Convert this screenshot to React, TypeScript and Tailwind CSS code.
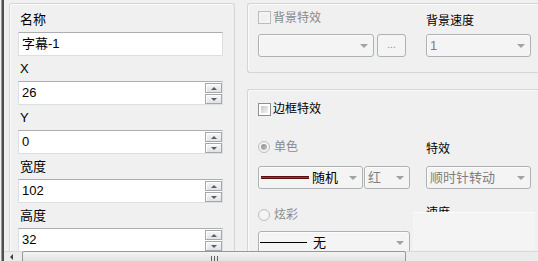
import React from 'react';

type Row = { label: string; value: string; spin: boolean };

const ROWS: Row[] = [
  { label: '名称', value: '字幕-1', spin: false },
  { label: 'X', value: '26', spin: true },
  { label: 'Y', value: '0', spin: true },
  { label: '宽度', value: '102', spin: true },
  { label: '高度', value: '32', spin: true },
];

function SpinButton({ up }: { up?: boolean }) {
  return (
    <div className="flex h-[10px] w-[17px] items-center justify-center border border-[#a7a7a7] bg-gradient-to-b from-[#f7f7f7] to-[#e3e3e3] shadow-[inset_1px_1px_0_#ffffff]">
      {up ? (
        <div className="h-0 w-0 border-x-[3px] border-b-[3px] border-x-transparent border-b-[#4d5f7c]" />
      ) : (
        <div className="h-0 w-0 border-x-[3px] border-t-[3px] border-x-transparent border-t-[#4d5f7c]" />
      )}
    </div>
  );
}

function Field({ row }: { row: Row }) {
  return (
    <div className="relative flex h-[24px] w-[205px] items-center border border-[#dbdfe6] border-t-[#abadb3] bg-white pl-[3px] text-[13px] text-black">
      <span>{row.value}</span>
      {row.spin && (
        <div className="absolute right-0 top-[1px] flex flex-col gap-[1px]">
          <SpinButton up />
          <SpinButton />
        </div>
      )}
    </div>
  );
}

function Arrow() {
  return <div className="h-0 w-0 border-x-[4px] border-t-[4px] border-x-transparent border-t-[#a2a2a2]" />;
}

function Combo({ className, children }: { className: string; children?: React.ReactNode }) {
  return (
    <div
      className={`flex h-[23px] shrink-0 items-center justify-between rounded-[3px] border border-[#adb2b5] bg-[#f4f4f4] pl-[3px] pr-[5px] shadow-[inset_1px_1px_0_#fbfbfb] ${className}`}
    >
      <div className="flex items-center">{children}</div>
      <Arrow />
    </div>
  );
}

function CheckBox({ disabled }: { disabled?: boolean }) {
  return disabled ? (
    <div className="h-[13px] w-[13px] shrink-0 border border-[#bcbcbc] bg-[#f4f4f4] p-[2px]">
      <div className="h-full w-full bg-[#f0f0f0]" />
    </div>
  ) : (
    <div className="h-[13px] w-[13px] shrink-0 border border-[#8e8f8f] bg-white p-[2px]">
      <div className="h-full w-full bg-gradient-to-br from-[#c8c8c8] to-[#f4f4f4]" />
    </div>
  );
}

function Radio({ checked }: { checked?: boolean }) {
  return (
    <div className="flex h-[12px] w-[12px] shrink-0 items-center justify-center rounded-full border border-[#bdbdbd] bg-[#f4f4f4]">
      {checked && <div className="h-[6px] w-[6px] rounded-full bg-gradient-to-br from-[#8e8e8e] to-[#c4c4c4]" />}
    </div>
  );
}

export default function App() {
  return (
    <div className="flex h-[261px] w-[538px] overflow-hidden bg-[#f0f0f0] font-['Liberation_Sans','Noto_Sans_CJK_SC',sans-serif] text-black">
      {/* 左侧分隔线 */}
      <div className="flex w-[4px] shrink-0">
        <div className="ml-[1px] w-[1px] bg-[#9a9a9a]" />
        <div className="w-[2px] bg-[#4f4f4f]" />
      </div>

      <div className="flex min-w-0 flex-1 flex-col">
        <div className="flex h-[251px] shrink-0 overflow-hidden pl-[5px] pt-[3px]">
          {/* 属性 */}
          <div className="w-[226px] shrink-0 rounded-t-[3px] border border-b-0 border-[#d5d5d5] pl-[8px] pt-[3px] shadow-[inset_1px_1px_0_#fafafa]">
            {ROWS.map(row => (
              <div key={row.label}>
                <div className="flex h-[25px] items-center pl-[2px] text-[13px]">{row.label}</div>
                <Field row={row} />
              </div>
            ))}
          </div>

          <div className="ml-[12px] flex min-w-0 flex-1 flex-col">
            {/* 背景 */}
            <div className="flex h-[70px] w-[300px] shrink-0 rounded-l-[3px] border border-r-0 border-[#d5d5d5] pl-[10px] text-[12px] shadow-[inset_1px_1px_0_#fafafa]">
              <div className="w-[148px] shrink-0 pt-[7px]">
                <div className="flex h-[13px] items-center gap-[2px]">
                  <CheckBox disabled />
                  <span className="text-[#8a8a8a]">背景特效</span>
                </div>
                <div className="mt-[10px] flex gap-[3px]">
                  <Combo className="w-[116px]" />
                  <div className="flex h-[23px] w-[29px] items-center justify-center rounded-[3px] border border-[#adb2b5] bg-[#f4f4f4] pb-[2px] text-[10px] text-[#8a8a8a]">
                    ...
                  </div>
                </div>
              </div>
              <div className="ml-[20px] pt-[9px]">
                <div className="flex h-[16px] items-center">背景速度</div>
                <Combo className="mt-[5px] w-[105px] text-[13px] text-[#7f7f7f]">1</Combo>
              </div>
            </div>

            {/* 边框 */}
            <div className="mt-[16px] flex w-[300px] flex-1 rounded-tl-[3px] border-l border-t border-[#d5d5d5] pl-[10px] text-[12px] shadow-[inset_1px_1px_0_#fafafa]">
              <div className="w-[152px] shrink-0 pt-[11px]">
                <div className="flex h-[16px] items-center gap-[2px]">
                  <CheckBox />
                  <span>边框特效</span>
                </div>
                <div className="mt-[22px] flex h-[16px] items-center gap-[4px]">
                  <Radio checked />
                  <span className="text-[#8a8a8a]">单色</span>
                </div>
                <div className="mt-[11px] flex gap-[1px]">
                  <Combo className="w-[105px] !pl-[2px]">
                    <div className="h-[3px] w-[48px] border-y border-[#5e1010] bg-[#c81e1e]" />
                    <span className="ml-[3px] text-[13px]">随机</span>
                  </Combo>
                  <Combo className="w-[46px] text-[13px] text-[#7f7f7f]">红</Combo>
                </div>
                <div className="mt-[18px] flex h-[16px] items-center gap-[4px]">
                  <Radio />
                  <span className="text-[#8a8a8a]">炫彩</span>
                </div>
                <Combo className="mt-[8px] w-[152px] !pl-[1px]">
                  <div className="h-[1px] w-[47px] bg-black" />
                  <span className="ml-[6px] text-[13px]">无</span>
                </Combo>
              </div>
              <div className="ml-[16px] pt-[51px]">
                <div className="flex h-[16px] items-center">特效</div>
                <Combo className="mt-[9px] w-[105px] text-[13px] text-[#7f7f7f]">顺时针转动</Combo>
                <div className="mt-[16px] h-[7px] overflow-hidden">
                  <div className="h-[16px] leading-[16px]">速度</div>
                </div>
                <div className="-ml-[13px] h-[38px] w-[122px] border-t border-[#fbfbfb] bg-[#f4f4f4]" />
              </div>
            </div>
          </div>
        </div>

        {/* 水平滚动条 */}
        <div className="flex h-[10px] shrink-0 border-t border-[#d9d9d9] bg-[#ececec]">
          <div className="flex w-[18px] shrink-0 items-end justify-center pb-[1px] pr-[4px]">
            <div className="h-0 w-0 border-y-[3px] border-r-[3px] border-y-transparent border-r-[#404040]" />
          </div>
          <div className="-mt-[1px] flex h-[12px] w-[384px] shrink-0 justify-center gap-[2px] rounded-[2px] border border-[#979797] bg-gradient-to-b from-[#f4f4f4] to-[#e0e0e0] pt-[4px]">
            <div className="h-[6px] w-[1px] bg-[#606060]" />
            <div className="h-[6px] w-[1px] bg-[#606060]" />
            <div className="h-[6px] w-[1px] bg-[#606060]" />
          </div>
        </div>
      </div>
    </div>
  );
}
